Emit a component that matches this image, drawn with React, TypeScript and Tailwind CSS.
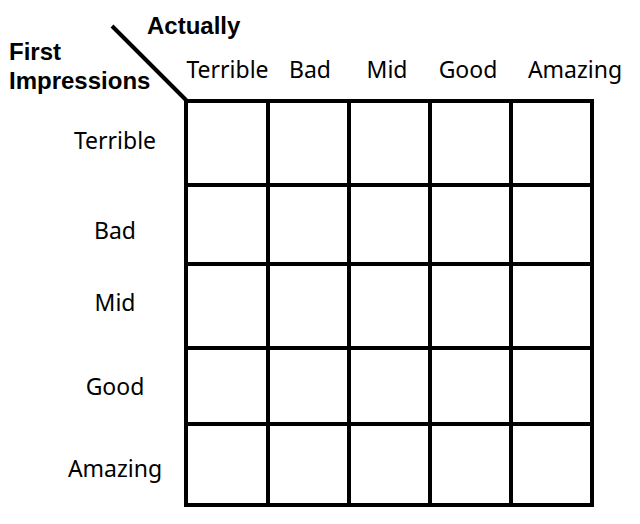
import React from "react";

const cols = [
  { label: "Terrible", w: "w-[87px]" },
  { label: "Bad", w: "w-[78px]" },
  { label: "Mid", w: "w-[76px]" },
  { label: "Good", w: "w-[86px]" },
  { label: "Amazing", w: "w-[128px]" },
];

const rows = [
  { label: "Terrible", cls: "h-[88px] pb-[6px]" },
  { label: "Bad", cls: "h-[79px] pt-[7px]" },
  { label: "Mid", cls: "h-[84px] pb-[12px]" },
  { label: "Good", cls: "h-[76px] pb-[4px]" },
  { label: "Amazing", cls: "h-[81px] pt-[3px]" },
];

export default function App() {
  return (
    <div className="relative w-[640px] h-[524px] bg-white overflow-hidden text-black">
      <svg
        className="absolute left-0 top-0"
        width="200"
        height="110"
        viewBox="0 0 200 110"
      >
        <line x1="112" y1="26" x2="187" y2="101" stroke="#000" strokeWidth="4" />
      </svg>
      <div className="flex h-[99px]">
        <div className="w-[184px] flex flex-col font-['Liberation_Sans',Arial,sans-serif] font-bold text-[24px] leading-[29px]">
          <div className="h-[37px] pt-[11px] pl-[147px] whitespace-nowrap">Actually</div>
          <div className="pl-[9px]">
            <div>First</div>
            <div>Impressions</div>
          </div>
        </div>
        <div className="flex pt-[54px] font-['Noto_Sans',sans-serif] text-[23px] leading-[30px]">
          {cols.map((c) => (
            <div key={c.label} className={`${c.w} text-center whitespace-nowrap`}>
              {c.label}
            </div>
          ))}
        </div>
      </div>
      <div className="flex">
        <div className="w-[184px] flex flex-col font-['Noto_Sans',sans-serif] text-[23px] leading-[30px]">
          {rows.map((r) => (
            <div key={r.label} className={`${r.cls} pl-[46px] flex items-center justify-center`}>
              {r.label}
            </div>
          ))}
        </div>
        <div className="bg-black p-[4px] grid gap-[4px] grid-cols-[78px_77px_77px_77px_77px] grid-rows-[80px_75px_80px_72px_77px]">
          {Array.from({ length: 25 }).map((_, i) => (
            <div key={i} className="bg-white" />
          ))}
        </div>
      </div>
    </div>
  );
}
